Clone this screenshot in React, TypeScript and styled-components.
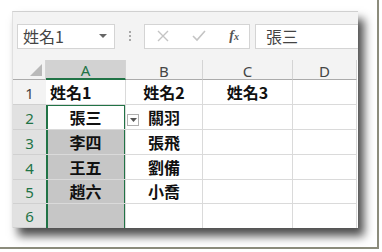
import styled, { createGlobalStyle } from 'styled-components';

const GlobalStyle = createGlobalStyle`
  html, body {
    margin: 0;
    padding: 0;
    background: #ffffff;
  }
`;

const green = '#217346';
const cjk = `"Noto Sans CJK TC", "Noto Sans CJK SC", sans-serif`;

type CellProps = {
  $bg?: string;
  $align?: 'left' | 'center';
  $sel?: string;
};

const rows = [
  { n: '1', a: '姓名1', b: '姓名2', c: '姓名3' },
  { n: '2', a: '張三', b: '關羽', c: '' },
  { n: '3', a: '李四', b: '張飛', c: '' },
  { n: '4', a: '王五', b: '劉備', c: '' },
  { n: '5', a: '趙六', b: '小喬', c: '' },
  { n: '6', a: '', b: '', c: '' },
];

const App = () => {
  return (
    <>
      <GlobalStyle />
      <Frame>
        <Panel>
          <Toolbar>
            <NameBox>
              <NameText>姓名1</NameText>
              <Caret />
            </NameBox>
            <Dots>
              <i /><i /><i />
            </Dots>
            <FormulaButtons>
              <svg width="12" height="12" viewBox="0 0 12 12">
                <path d="M1 1 L11 11 M11 1 L1 11" stroke="#c4c4c4" strokeWidth="1.4" />
              </svg>
              <svg width="14" height="12" viewBox="0 0 14 12">
                <path d="M1 6 L5 10 L13 1" stroke="#c4c4c4" strokeWidth="1.6" fill="none" />
              </svg>
              <Fx>f<sub>x</sub></Fx>
            </FormulaButtons>
            <FormulaInput>張三</FormulaInput>
          </Toolbar>
          <Sheet>
            <Corner>
              <svg width="12" height="12" viewBox="0 0 12 12">
                <path d="M12 0 L12 12 L0 12 Z" fill="#b9b9b9" />
              </svg>
            </Corner>
            <ColHeader $active>A</ColHeader>
            <ColHeader>B</ColHeader>
            <ColHeader>C</ColHeader>
            <ColHeader>D</ColHeader>
            {rows.map((r, i) => {
              const selected = i > 0;
              const last = i === rows.length - 1;
              let sel = '';
              if (selected) {
                sel = `inset 2px 0 0 ${green}, inset -1px 0 0 ${green}`;
                if (i === 1) sel += `, inset 0 1px 0 ${green}`;
              }
              return [
                <RowHeader key={`h${i}`} $active={selected}>{r.n}</RowHeader>,
                <Cell
                  key={`a${i}`}
                  $align={i === 0 ? 'left' : 'center'}
                  $bg={i > 1 ? '#c6c6c6' : '#ffffff'}
                  $sel={sel}
                  $last={last}
                >
                  {r.a}
                </Cell>,
                <Cell key={`b${i}`} $align="center" $last={last} $relative={i === 1}>
                  {i === 1 && (
                    <DropButton>
                      <svg width="7" height="4" viewBox="0 0 7 4">
                        <path d="M0 0 L7 0 L3.5 4 Z" fill="#555" />
                      </svg>
                    </DropButton>
                  )}
                  {r.b}
                </Cell>,
                <Cell key={`c${i}`} $align="center" $last={last}>{r.c}</Cell>,
                <Cell key={`d${i}`} $last={last} />,
              ];
            })}
          </Sheet>
        </Panel>
      </Frame>
    </>
  );
};

export default App;

const Frame = styled.div`
  box-sizing: border-box;
  width: 379px;
  height: 249px;
  padding: 11px 0 0 12px;
  border-right: 2px solid #8c8c7c;
  border-bottom: 2px solid #8c8c7c;
  background: #ffffff;
`;

const Panel = styled.div`
  width: 346px;
  background: #f3f3f3;
  border-top: 1px solid #d0d0d0;
  border-left: 1px solid #e0e0e0;
  box-sizing: border-box;
  box-shadow: 6px 8px 9px rgba(0, 0, 0, 0.7);
`;

const Toolbar = styled.div`
  display: flex;
  align-items: center;
  height: 48px;
  padding: 0 0 0 4px;
  box-sizing: border-box;
`;

const NameBox = styled.div`
  box-sizing: border-box;
  width: 98px;
  height: 25px;
  background: #ffffff;
  border: 1px solid #d4d4d4;
  display: flex;
  align-items: center;
  justify-content: space-between;
  padding: 0 7px 0 5px;
`;

const NameText = styled.span`
  font-family: ${cjk};
  font-size: 16px;
  color: #444444;
`;

const Caret = styled.span`
  width: 0;
  height: 0;
  border-left: 4px solid transparent;
  border-right: 4px solid transparent;
  border-top: 4px solid #666666;
`;

const Dots = styled.div`
  display: flex;
  flex-direction: column;
  gap: 2px;
  margin: 0 13px 0 14px;

  i {
    display: block;
    width: 2px;
    height: 2px;
    background: #a8a8a8;
  }
`;

const FormulaButtons = styled.div`
  box-sizing: border-box;
  width: 106px;
  height: 25px;
  background: #ffffff;
  border: 1px solid #d4d4d4;
  display: flex;
  align-items: center;
  justify-content: space-between;
  padding: 0 10px 0 12px;
`;

const Fx = styled.span`
  font-family: "Liberation Serif", serif;
  font-style: italic;
  font-weight: 700;
  font-size: 14px;
  color: #555555;

  sub {
    font-size: 10px;
    vertical-align: baseline;
  }
`;

const FormulaInput = styled.div`
  box-sizing: border-box;
  flex: 1;
  height: 25px;
  margin-left: 5px;
  background: #ffffff;
  border: 1px solid #d4d4d4;
  border-right: none;
  display: flex;
  align-items: center;
  padding-left: 10px;
  font-family: ${cjk};
  font-size: 16px;
  color: #444444;
`;

const Sheet = styled.div`
  display: grid;
  grid-template-columns: 33px 80px 77px 90px 64px;
  grid-template-rows: 20px 25px 25px 25px 25px 24px 24px;
  background: #ffffff;
`;

const Corner = styled.div`
  background: #f3f3f3;
  border-right: 1px solid #d4d4d4;
  border-bottom: 1px solid #ababab;
  display: flex;
  align-items: flex-end;
  justify-content: flex-end;
  padding: 0 3px 3px 0;
`;

const ColHeader = styled.div<{ $active?: boolean }>`
  box-sizing: border-box;
  display: flex;
  align-items: center;
  justify-content: center;
  background: ${p => (p.$active ? '#d2d2d2' : '#f3f3f3')};
  border-right: 1px solid #d4d4d4;
  border-bottom: ${p => (p.$active ? `2px solid ${green}` : '1px solid #ababab')};
  font-family: "Noto Sans", sans-serif;
  font-size: 15px;
  color: ${p => (p.$active ? green : '#444444')};
  padding-top: 2px;
`;

const RowHeader = styled.div<{ $active?: boolean }>`
  box-sizing: border-box;
  display: flex;
  align-items: flex-end;
  justify-content: center;
  padding-bottom: 1px;
  background: ${p => (p.$active ? '#e1e1e1' : '#f3f3f3')};
  border-bottom: 1px solid #d0d0d0;
  font-family: "Noto Sans", sans-serif;
  font-size: 15px;
  color: ${p => (p.$active ? green : '#444444')};
`;

const Cell = styled.div<CellProps & { $last?: boolean; $relative?: boolean }>`
  box-sizing: border-box;
  position: ${p => (p.$relative ? 'relative' : 'static')};
  display: flex;
  align-items: flex-end;
  justify-content: ${p => (p.$align === 'left' ? 'flex-start' : 'center')};
  padding: 0 4px 1px 4px;
  background: ${p => p.$bg || '#ffffff'};
  border-right: 1px solid #dadada;
  border-bottom: ${p => (p.$last ? 'none' : '1px solid #dadada')};
  box-shadow: ${p => p.$sel || 'none'};
  font-family: ${cjk};
  font-weight: 700;
  font-size: 16px;
  line-height: 22px;
  color: #111111;
`;

const DropButton = styled.span`
  position: absolute;
  left: 1px;
  bottom: 3px;
  width: 12px;
  height: 12px;
  box-sizing: border-box;
  background: #ffffff;
  border: 1px solid #b0b0b0;
  display: flex;
  align-items: center;
  justify-content: center;
`;
